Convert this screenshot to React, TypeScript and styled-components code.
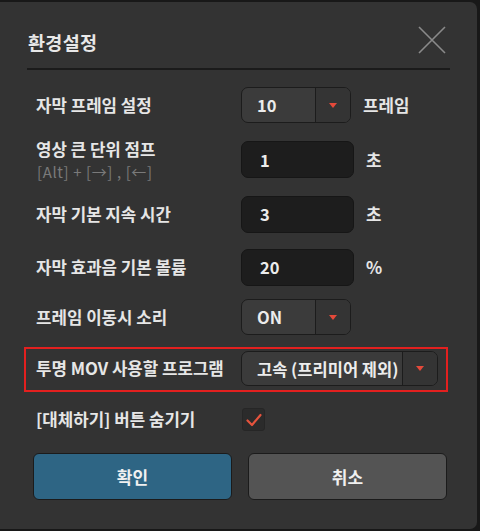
import React from "react";
import styled, { createGlobalStyle } from "styled-components";

const Global = createGlobalStyle`
  html, body { margin: 0; padding: 0; background: #181818; }
  body { font-family: "Noto Sans CJK KR", "Noto Sans", sans-serif; }
  * { box-sizing: border-box; }
`;

const Dialog = styled.div`
  width: 477px;
  height: 527px;
  margin-top: 2px;
  background: #333333;
  border-radius: 0 7px 7px 0;
  display: flex;
  flex-direction: column;
`;

const Header = styled.div`
  margin: 0 27px;
  height: 68px;
  padding-top: 14px;
  display: flex;
  align-items: center;
  justify-content: space-between;
  border-bottom: 2px solid #1b1b1b;
`;

const Title = styled.h1`
  margin: 0 0 0 1px;
  font-size: 18.5px;
  font-weight: 700;
  color: #e8e8e8;
  letter-spacing: 0.3px;
`;

const CloseButton = styled.button`
  width: 30px;
  height: 30px;
  padding: 0;
  margin-right: 3px;
  margin-top: -4px;
  border: none;
  background: transparent;
  display: flex;
  align-items: center;
  justify-content: center;
`;

const Body = styled.div`
  padding-left: 36px;
  display: flex;
  flex-direction: column;
`;

const Row = styled.div<{ $mt: number; $h?: number }>`
  display: flex;
  align-items: center;
  margin-top: ${(p) => p.$mt}px;
  height: ${(p) => p.$h ?? 36}px;
`;

const HighlightRow = styled.div<{ $mt: number }>`
  display: flex;
  align-items: center;
  margin: ${(p) => p.$mt}px 0 0 -12px;
  width: 424px;
  height: 45px;
  padding: 2px 8px 4px 10px;
  border: 2px solid #e3201f;
`;

const LabelBox = styled.div`
  width: 205px;
  flex: none;
  display: flex;
  flex-direction: column;
`;

const Label = styled.span`
  font-size: 16.8px;
  font-weight: 700;
  color: #e6e6e6;
  line-height: 21px;
  white-space: nowrap;
`;

const SubLabel = styled.span`
  font-size: 15px;
  color: #7a7a7a;
  line-height: 18px;
  letter-spacing: 0.6px;
  margin-top: 3px;
  margin-left: 1px;
  white-space: nowrap;
`;

const SelectBox = styled.div<{ $w: number; $h?: number }>`
  width: ${(p) => p.$w}px;
  height: ${(p) => p.$h ?? 36}px;
  flex: none;
  display: flex;
  border: 1px solid #1c1c1c;
  border-radius: 7px;
  overflow: hidden;
  background: #3b3b3b;
`;

const SelectValue = styled.div`
  flex: 1;
  display: flex;
  align-items: center;
  padding-left: 15px;
  font-size: 16.5px;
  font-weight: 700;
  color: #ececec;
  white-space: nowrap;
`;

const SelectArrow = styled.div`
  width: 35px;
  flex: none;
  border-left: 1px solid #1c1c1c;
  background: #343434;
  display: flex;
  align-items: center;
  justify-content: center;
`;

const Triangle = styled.span`
  width: 0;
  height: 0;
  border-left: 4px solid transparent;
  border-right: 4px solid transparent;
  border-top: 5px solid #e4493a;
`;

const InputBox = styled.div`
  width: 113px;
  height: 37px;
  flex: none;
  display: flex;
  align-items: center;
  padding-left: 18px;
  background: #1d1d1d;
  border: 1px solid #161616;
  border-radius: 7px;
  font-size: 16.5px;
  font-weight: 700;
  color: #ececec;
`;

const Unit = styled.span`
  margin-left: 12px;
  font-size: 16.8px;
  font-weight: 700;
  color: #e6e6e6;
`;

const CheckBox = styled.div`
  width: 23px;
  height: 23px;
  margin-left: 1px;
  flex: none;
  background: #2b2b2b;
  border: 1px solid #262626;
  border-radius: 3px;
  display: flex;
  align-items: center;
  justify-content: center;
`;

const Footer = styled.div`
  margin-top: 22px;
  padding-left: 33px;
  display: flex;
  gap: 16px;
`;

const Button = styled.button<{ $primary?: boolean }>`
  width: 199px;
  height: 47px;
  border: 1px solid #1b1b1b;
  border-radius: 6px;
  background: ${(p) => (p.$primary ? "#2e6584" : "#545454")};
  color: #f0f0f0;
  font-family: "Noto Sans CJK KR", "Noto Sans", sans-serif;
  font-size: 17px;
  font-weight: 700;
`;

const Select = ({ value, w, h }: { value: string; w: number; h?: number }) => (
  <SelectBox $w={w} $h={h}>
    <SelectValue>{value}</SelectValue>
    <SelectArrow>
      <Triangle />
    </SelectArrow>
  </SelectBox>
);

export default function App() {
  return (
    <>
      <Global />
      <Dialog>
        <Header>
          <Title>환경설정</Title>
          <CloseButton aria-label="닫기">
            <svg width="28" height="28" viewBox="0 0 28 28">
              <path d="M1 1 L27 27 M27 1 L1 27" stroke="#8a8a8a" strokeWidth="1.6" fill="none" />
            </svg>
          </CloseButton>
        </Header>
        <Body>
          <Row $mt={17}>
            <LabelBox>
              <Label>자막 프레임 설정</Label>
            </LabelBox>
            <Select value="10" w={110} />
            <Unit>프레임</Unit>
          </Row>
          <Row $mt={18} $h={37}>
            <LabelBox>
              <Label>영상 큰 단위 점프</Label>
              <SubLabel>[Alt] + [→] , [←]</SubLabel>
            </LabelBox>
            <InputBox>1</InputBox>
            <Unit>초</Unit>
          </Row>
          <Row $mt={18}>
            <LabelBox>
              <Label>자막 기본 지속 시간</Label>
            </LabelBox>
            <InputBox>3</InputBox>
            <Unit>초</Unit>
          </Row>
          <Row $mt={17}>
            <LabelBox>
              <Label>자막 효과음 기본 볼륨</Label>
            </LabelBox>
            <InputBox>20</InputBox>
            <Unit>%</Unit>
          </Row>
          <Row $mt={14}>
            <LabelBox>
              <Label>프레임 이동시 소리</Label>
            </LabelBox>
            <Select value="ON" w={110} />
          </Row>
          <HighlightRow $mt={12}>
            <LabelBox>
              <Label>투명 MOV 사용할 프로그램</Label>
            </LabelBox>
            <Select value="고속 (프리미어 제외)" w={197} h={35} />
          </HighlightRow>
          <Row $mt={16} $h={23}>
            <LabelBox>
              <Label>[대체하기] 버튼 숨기기</Label>
            </LabelBox>
            <CheckBox>
              <svg width="16" height="14" viewBox="0 0 16 14">
                <path d="M1.5 7.5 L6 12 L14.5 2" stroke="#e5533d" strokeWidth="2.2" fill="none" strokeLinecap="round" strokeLinejoin="round" />
              </svg>
            </CheckBox>
          </Row>
        </Body>
        <Footer>
          <Button $primary>확인</Button>
          <Button>취소</Button>
        </Footer>
      </Dialog>
    </>
  );
}
